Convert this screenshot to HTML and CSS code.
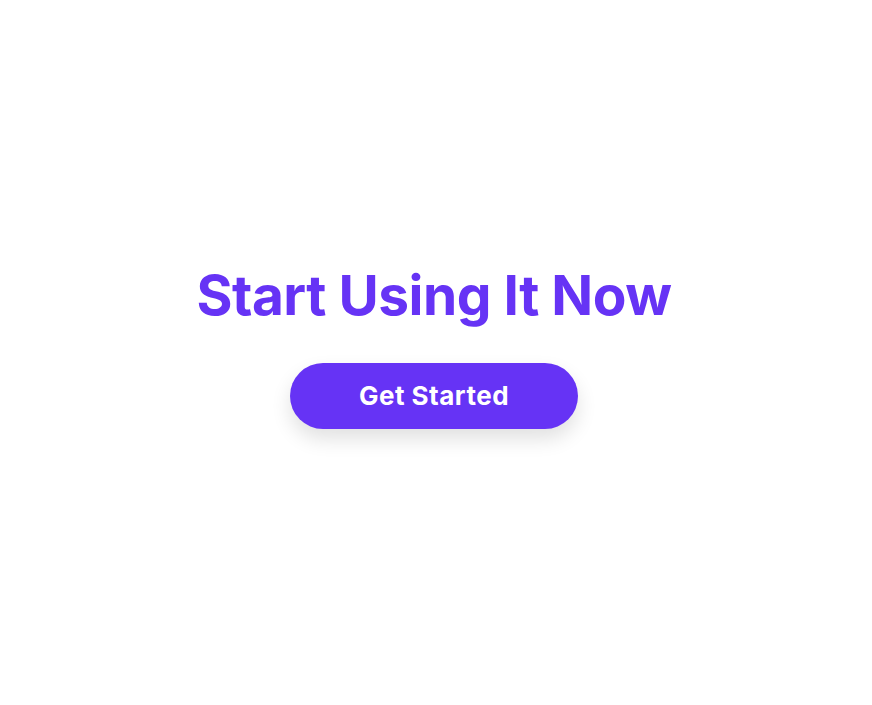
FILE: index.html
```html
<!DOCTYPE html>
<html>
<head>
<meta charset="utf-8">
<link rel="stylesheet" href="styles.css">
</head>
<body>
<main class="cta">
  <h1 class="cta-title">Start Using It Now</h1>
  <a class="cta-button" href="#">Get Started</a>
</main>
</body>
</html>
```
FILE: styles.css
```css
html, body {
  margin: 0;
  padding: 0;
  background: #ffffff;
}
body {
  font-family: "Inter", "Liberation Sans", sans-serif;
}
.cta {
  box-sizing: border-box;
  height: 705px;
  padding: 0 4px 8px 0;
  display: flex;
  flex-direction: column;
  align-items: center;
  justify-content: center;
  gap: 39.5px;
}
.cta-title {
  margin: 0;
  font-size: 55px;
  font-weight: 700;
  line-height: 55px;
  color: #6633f5;
  letter-spacing: -0.5px;
}
.cta-button {
  display: flex;
  align-items: center;
  justify-content: center;
  width: 288px;
  height: 66px;
  border-radius: 33px;
  background: #6633f5;
  color: #ffffff;
  font-size: 26px;
  font-weight: 700;
  letter-spacing: 0.5px;
  text-decoration: none;
  box-shadow: 0 10px 20px rgba(0, 0, 0, 0.12);
}
```
